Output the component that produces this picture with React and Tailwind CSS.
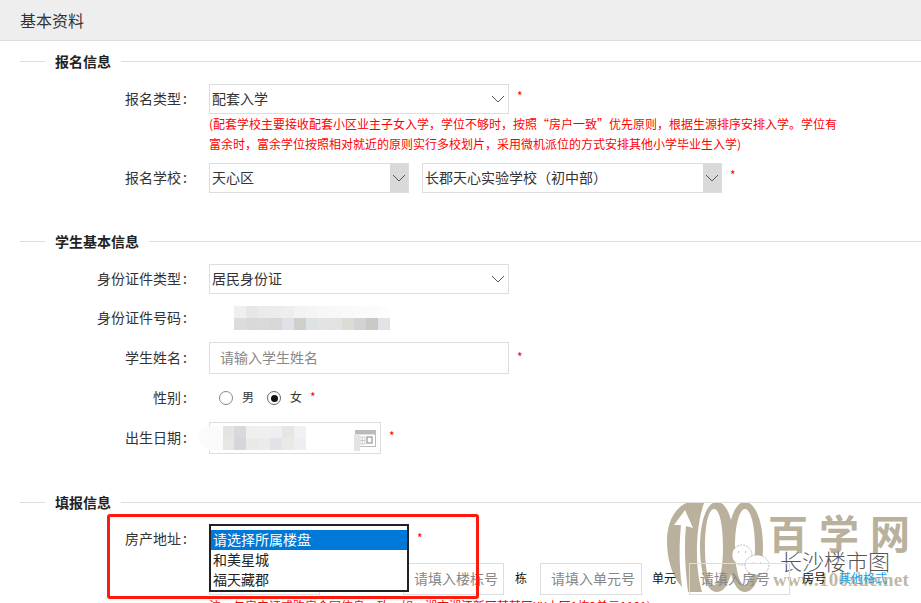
const idBlur = [
    ['#f0eff0', '#e6e6e6', '#ebebeb', '#ececec', '#efeeee', '#f3f3f3', '#f5f5f5', '#f7f7f7', '#f8f8f8', '#f9f9f9', '#fafafa', '#fbfbfb', '#fdfdfd'],
    ['#dcdcdc', '#d9d9d9', '#dadada', '#d7d7d7', '#e0e0e6', '#cfcfcc', '#dde2e5', '#e2e3e4', '#e2e2e2', '#dcdcd6', '#d3d3d3', '#c9c9c6', '#e2e3e6'],
];

const dobBlur = [
    ['#e4e4e4', '#d9d9db', '#f0efef', '#f0f0f0', '#eeeff2', '#e6e6e6', '#f1f1f1'],
    ['#e6e6e2', '#d6d6d9', '#eae9e6', '#ebebe9', '#e2e3e7', '#ebe9e6', '#eceef1'],
];

function Chevron() {
    return (
        <svg width="14" height="8" viewBox="0 0 14 8" fill="none" stroke="#555" strokeWidth="1">
            <path d="M1 1l6 6 6-6" />
        </svg>
    );
}

function Legend({ title }) {
    return (
        <div className="flex items-center h-[20px] pl-[20px]">
            <div className="w-[25px] h-[1px] bg-[#ddd]"></div>
            <span className="px-[10px] text-[14px] font-bold text-[#222]">{title}</span>
            <div className="flex-1 h-[1px] bg-[#ddd]"></div>
        </div>
    );
}

function Label({ text }) {
    return (
        <label className="-mt-[2px] w-[187px] shrink-0 text-right text-[14px] text-[#333]">
            {text}<span className="ml-[2px]">:</span>
        </label>
    );
}

function Row({ label, children, className }) {
    return (
        <div className={'flex items-center ' + (className || '')}>
            <Label text={label} />
            <div className="ml-[22px] flex items-center">{children}</div>
        </div>
    );
}

function Star({ className }) {
    return <span className={'text-[12px] text-[#f00] ' + (className || '')}>*</span>;
}

function Select({ value, width, arrowBox }) {
    return (
        <div className={'flex items-center justify-between h-[30px] border border-[#ddd] bg-white text-[14px] text-[#333] pl-[2px] ' + width}>
            <span className="-mt-[2px]">{value}</span>
            {arrowBox ? (
                <span className="flex h-full w-[18px] items-center justify-center bg-[#d9d9d9]"><Chevron /></span>
            ) : (
                <span className="mr-[3px]"><Chevron /></span>
            )}
        </div>
    );
}

function Blur({ rows, cols }) {
    return (
        <div className={cols}>
            {rows.flat().map((c, i) => (
                <div key={i} className="h-[12px] w-[12px]" style={{ backgroundColor: c }}></div>
            ))}
        </div>
    );
}

function TextInput({ placeholder, className }) {
    return (
        <input
            readOnly
            placeholder={placeholder}
            className={'h-[32px] border border-[#ddd] bg-transparent pl-[10px] pb-[3px] text-[14px] outline-none placeholder:text-[#888] ' + className}
        />
    );
}

function Watermark() {
    return (
        <div className="absolute left-[660px] top-[495px] h-[108px] w-[261px] overflow-hidden">
            <svg className="absolute left-0 top-0" width="110" height="108" viewBox="0 0 110 108" fill="none">
                {/* the 1 with its arrow */}
                <path d="M7 46C7 28 14 14 26 8L44 8C36 30 34 70 42 97L28 97C25 72 24 50 26 31L33 33L25 15L14 30L21 30C19 50 19 72 22 92C12 82 7 64 7 46Z" fill="#b9b19c" />
                <path fillRule="evenodd" d="M57 7C68 7 74 28 74 52C74 76 68 97 57 97C46 97 40 76 40 52C40 28 46 7 57 7ZM54 14C48 14 45 32 45 52C45 72 48 90 54 90C60 90 63 72 63 52C63 32 60 14 54 14Z" fill="#b9b19c" />
                <path fillRule="evenodd" d="M85 7C96 7 103 28 103 52C103 76 96 97 85 97C74 97 68 76 68 52C68 28 74 7 85 7ZM85 14C79 14 75 32 75 52C75 72 79 90 85 90C91 90 95 72 95 52C95 32 91 14 85 14Z" fill="#b9b19c" />
                {/* wechat bubbles */}
                <ellipse cx="82" cy="60" rx="10" ry="10" fill="#fff" stroke="#aaa" strokeWidth="0.8" strokeDasharray="2 1" />
                <ellipse cx="97" cy="70" rx="12" ry="10" fill="#fff" stroke="#aaa" strokeWidth="0.8" strokeDasharray="2 1" />
                <path d="M78 57h1M85 57h1M93 68h1M100 68h1" stroke="#888" />
            </svg>
            <span className="absolute left-[108px] top-[17px] text-[40px] font-bold leading-none tracking-[11px] text-[#b9b19c] whitespace-nowrap">百学网</span>
            <span className="absolute left-[113px] top-[75px] font-['Liberation_Serif',serif] text-[19px] font-bold leading-none tracking-[0.3px] text-[#c0b8a5] whitespace-nowrap">www.100xue.net</span>
            <span className="absolute left-[120px] top-[54px] text-[22px] font-light leading-none text-[#555] whitespace-nowrap">长沙楼市图</span>
        </div>
    );
}

export default function App() {
    return (
        <div className="relative h-[603px] w-[921px] overflow-hidden bg-white font-['Noto_Sans_CJK_SC',sans-serif]">
            <Watermark />

            <div className="relative">
                <div className="flex h-[41px] items-center border-b border-[#ddd] bg-[#eee] pl-[20px] text-[16px] text-[#333]">基本资料</div>

                <div className="pt-[10px]">
                    <Legend title="报名信息" />
                    <Row label="报名类型" className="mt-[13px]">
                        <Select value="配套入学" width="w-[300px]" />
                        <Star className="ml-[8px] -mt-[6px]" />
                    </Row>
                    <p className="ml-[209px] w-[640px] text-[12px] leading-[20px] text-[#f00]">
                        (配套学校主要接收配套小区业主子女入学，学位不够时，按照“房户一致”优先原则，根据生源排序安排入学。学位有富余时，富余学位按照相对就近的原则实行多校划片，采用微机派位的方式安排其他小学毕业生入学)
                    </p>
                    <Row label="报名学校" className="mt-[9px]">
                        <Select value="天心区" width="w-[200px]" arrowBox />
                        <div className="ml-[13px]">
                            <Select value="长郡天心实验学校（初中部）" width="w-[300px]" arrowBox />
                        </div>
                        <Star className="ml-[8px] -mt-[6px]" />
                    </Row>
                </div>

                <div className="mt-[38px]">
                    <Legend title="学生基本信息" />
                    <Row label="身份证件类型" className="mt-[13px]">
                        <Select value="居民身份证" width="w-[300px]" />
                    </Row>
                    <Row label="身份证件号码" className="h-[48px]">
                        <div className="ml-[25px]">
                            <Blur rows={idBlur} cols="grid grid-cols-[repeat(13,12px)]" />
                        </div>
                    </Row>
                    <Row label="学生姓名">
                        <TextInput placeholder="请输入学生姓名" className="w-[300px]" />
                        <Star className="ml-[8px] -mt-[3px]" />
                    </Row>
                    <Row label="性别" className="mt-[14px] h-[20px]">
                        <div className="ml-[10px] flex items-center text-[12px] text-[#333]">
                            <span className="h-[14px] w-[14px] rounded-full border border-[#888] bg-white"></span>
                            <span className="ml-[9px] -mt-[2px]">男</span>
                            <span className="ml-[13px] flex h-[14px] w-[14px] items-center justify-center rounded-full border border-[#666] bg-white">
                                <span className="h-[7px] w-[7px] rounded-full bg-[#111]"></span>
                            </span>
                            <span className="ml-[9px] -mt-[2px]">女</span>
                            <Star className="ml-[8px] -mt-[2px]" />
                        </div>
                    </Row>
                    <Row label="出生日期" className="mt-[14px]">
                        <div className="relative flex h-[32px] w-[172px] items-center justify-between border border-[#ddd] pl-[12px] pr-[4px]">
                            <Blur rows={dobBlur} cols="grid grid-cols-[repeat(7,12px)]" />
                            <svg width="21" height="17" viewBox="0 0 21 17" fill="none">
                                <rect x="0" y="0" width="21" height="4" fill="#bbb" />
                                <rect x="0.5" y="4" width="20" height="12.5" stroke="#bbb" />
                                <path d="M5 7h5v7H5zM7.5 7v7M5 10.5h5" stroke="#ccc" />
                                <rect x="12" y="7" width="5" height="6" stroke="#aaa" strokeWidth="1.5" />
                            </svg>
                            {/* smudges left by the blur over the field */}
                            <div className="absolute -left-[11px] top-[3px] h-[24px] w-[24px] rounded-l-full bg-[#fbfbfb]"></div>
                            <div className="absolute right-[20px] top-[11px] h-[17px] w-[6px] bg-[#e4e4e4]"></div>
                        </div>
                        <Star className="ml-[8px] -mt-[4px]" />
                    </Row>
                </div>

                <div className="mt-[38px]">
                    <Legend title="填报信息" />
                    <div className="mt-[17px] flex h-[20px] items-center">
                        <Label text="房产地址" />
                        <Star className="ml-[230px] -mt-[3px]" />
                    </div>
                    <div className="ml-[209px] mt-[14px] flex items-center text-[#111]">
                        <TextInput className="w-[111px]" />
                        <TextInput placeholder="请填入楼栋号" className="ml-[83px] w-[101px]" />
                        <span className="ml-[11px] -mt-[2px] text-[12px]">栋</span>
                        <TextInput placeholder="请填入单元号" className="ml-[13px] w-[102px]" />
                        <span className="ml-[10px] -mt-[2px] text-[12px]">单元</span>
                        <TextInput placeholder="请填入房号" className="ml-[13px] w-[101px]" />
                        <span className="ml-[12px] -mt-[2px] text-[12px]">房号</span>
                        <a className="ml-[13px] -mt-[2px] text-[12px] text-[#1a9fe0]">其他格式</a>
                    </div>
                    <p className="ml-[209px] mt-[1px] text-[12px] leading-[20px] text-[#f00] whitespace-nowrap">注：与房产证或购房合同信息一致，如：湘市湘江新区某某区XX小区1栋2单元1101)</p>
                </div>
            </div>

            {/* Open listbox */}
            <div className="absolute left-[209px] top-[524px] h-[68px] w-[200px] border-[2px] border-[#222] bg-white pt-[4px] text-[14px] leading-[18px] text-[#222]">
                <div className="h-[20px] bg-[#0078d7] pl-[2px] text-white">请选择所属楼盘</div>
                <div className="h-[20px] pl-[2px]">和美星城</div>
                <div className="h-[20px] pl-[2px]">福天藏郡</div>
            </div>

            {/* Red highlight box */}
            <div className="absolute left-[107px] top-[514px] h-[85px] w-[372px] rounded-[3px] border-[3px] border-[#fe1a0c]"></div>
        </div>
    );
}
